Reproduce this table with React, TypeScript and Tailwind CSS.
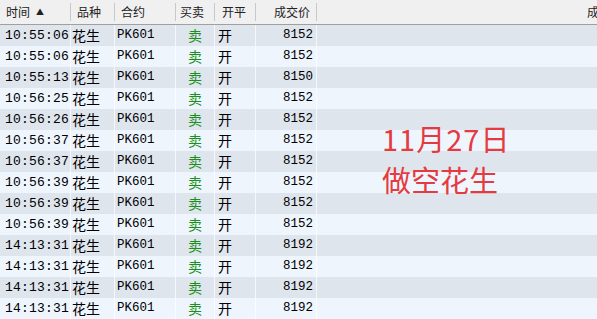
const ROWS: [string, string][] = [
  ['10:55:06', '8152'],
  ['10:55:06', '8152'],
  ['10:55:13', '8150'],
  ['10:56:25', '8152'],
  ['10:56:26', '8152'],
  ['10:56:37', '8152'],
  ['10:56:37', '8152'],
  ['10:56:39', '8152'],
  ['10:56:39', '8152'],
  ['10:56:39', '8152'],
  ['14:13:31', '8192'],
  ['14:13:31', '8192'],
  ['14:13:31', '8192'],
  ['14:13:31', '8192'],
];

const cell = 'h-full flex items-center border-r border-white/70 shrink-0';
const head = 'h-[18px] flex items-center border-r border-[#c8c8c8] shrink-0';

export default function App() {
  return (
    <div className="relative w-[597px] h-[319px] overflow-hidden bg-[#eef5fd] font-['Liberation_Mono','Noto_Sans_CJK_SC',monospace] text-[13px] text-black">
      <div className="flex items-center h-[25px] bg-[#f0f0f0] border-b border-[#a0a0a0] text-[12px] font-['Noto_Sans_CJK_SC',sans-serif] text-[#222]">
        <div className={`${head} w-[71px] pl-[6px] gap-[6px]`}>
          <span>时间</span>
          <span className="text-[8px]">▲</span>
        </div>
        <div className={`${head} w-[44px] pl-[6px]`}>品种</div>
        <div className={`${head} w-[61px] pl-[6px]`}>合约</div>
        <div className={`${head} w-[39px] pl-[4px]`}>买卖</div>
        <div className={`${head} w-[41px] pl-[7px]`}>开平</div>
        <div className={`${head} w-[61px] justify-end pr-[6px]`}>成交价</div>
        <div className="flex-1 h-[18px] flex items-center pl-[270px] whitespace-nowrap">成交量</div>
      </div>

      {ROWS.map(([time, price], i) => (
        <div
          key={i}
          className={`flex items-center h-[21px] ${i % 2 === 0 ? 'bg-[#dfe5ed]' : 'bg-[#eef5fd]'}`}
        >
          <div className={`${cell} w-[71px] pl-[5px] tracking-[0.2px]`}>{time}</div>
          <div className={`${cell} w-[44px] pl-[1px] text-[14px] font-['Noto_Sans_CJK_SC',sans-serif]`}>花生</div>
          <div className={`${cell} w-[61px] pl-[2px] text-[12.5px]`}>PK601</div>
          <div className={`${cell} w-[39px] justify-center text-[14px] text-[#1a8f1a] font-['Noto_Sans_CJK_SC',sans-serif]`}>卖</div>
          <div className={`${cell} w-[41px] pl-[3px] text-[14px] font-['Noto_Sans_CJK_SC',sans-serif]`}>开</div>
          <div className={`${cell} w-[61px] justify-end pr-[3px] text-[12.5px]`}>{price}</div>
          <div className="flex-1 h-full" />
        </div>
      ))}

      <div className="absolute left-[382px] top-[118px] text-[29px] leading-[41px] text-[#e53a3f] font-['Noto_Sans_CJK_SC',sans-serif]">
        <div className="tracking-[1px]">11月27日</div>
        <div>做空花生</div>
      </div>
    </div>
  );
}
